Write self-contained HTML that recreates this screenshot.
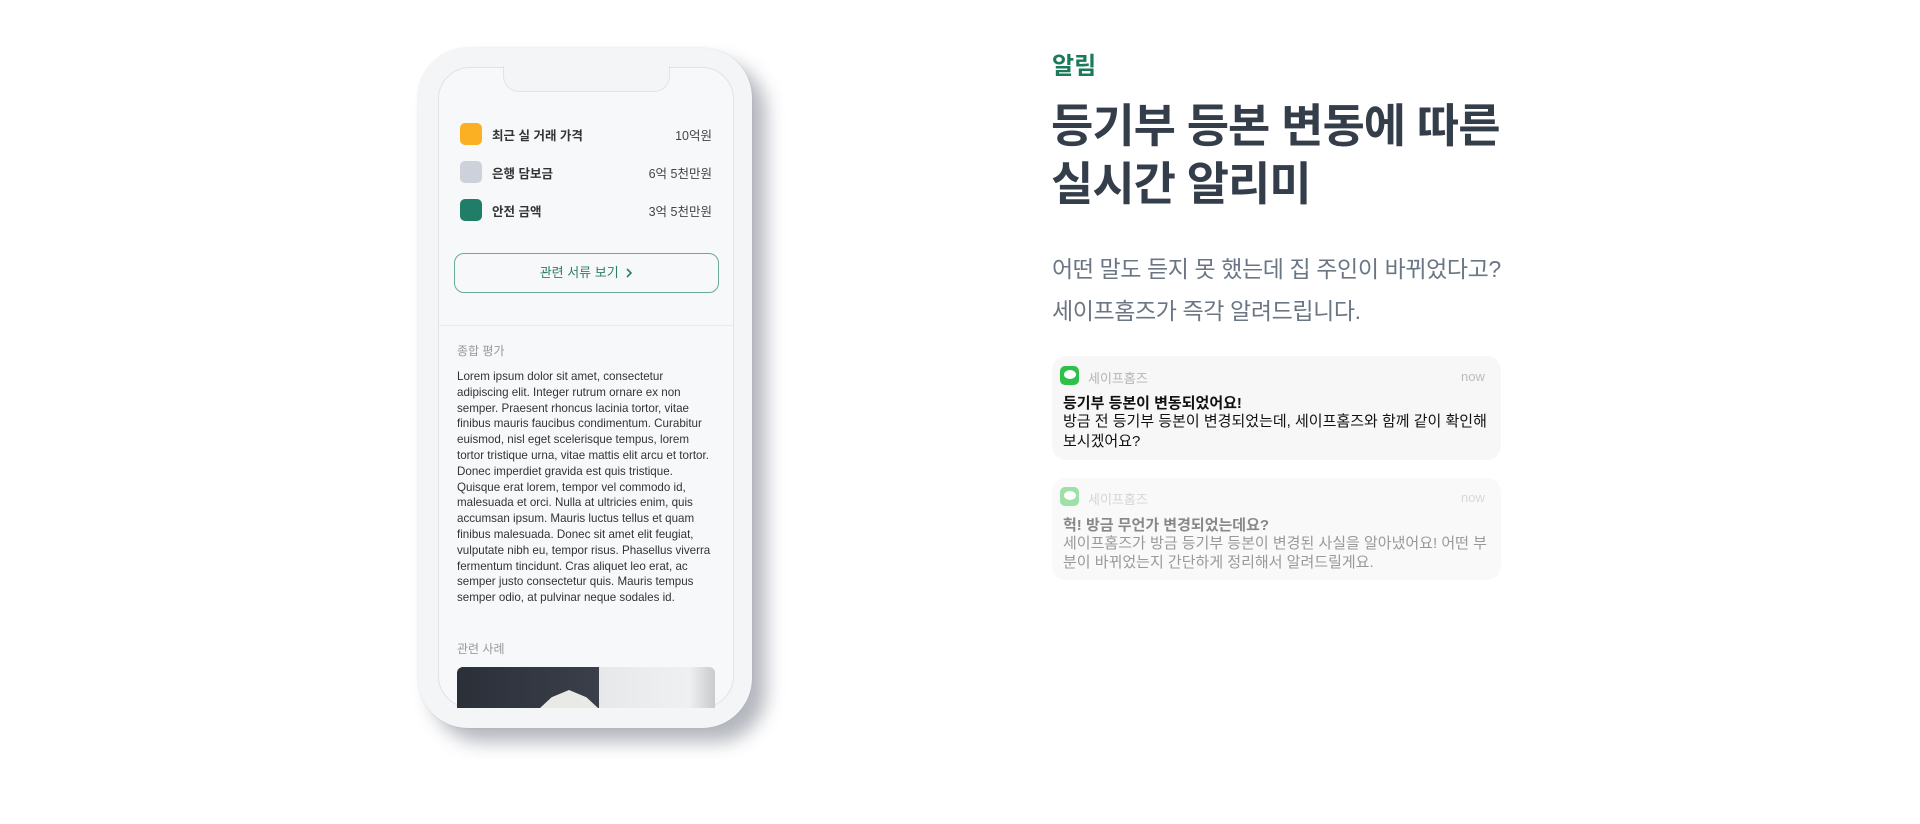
<!DOCTYPE html>
<html><head><meta charset="utf-8"><style>
*{margin:0;padding:0;box-sizing:border-box}
body{width:1920px;height:824px;background:#fff;font-family:"Liberation Sans","Noto Sans CJK KR",sans-serif;position:relative;overflow:hidden}
.a{position:absolute;white-space:nowrap}
.phone{position:absolute;left:418px;top:48px;width:334px;height:680px;border-radius:50px;background:#f3f5f7;box-shadow:14px 14px 18px rgba(40,50,70,.35),0 0 2px rgba(0,0,0,.1)}
.screen{position:absolute;left:438px;top:67px;width:296px;height:641px;border-radius:32px;background:#f7f8f9;border:1.5px solid #dde4ea;overflow:hidden}
.notch{position:absolute;left:503px;top:66px;width:167px;height:26px;background:#f3f5f7;border:1.5px solid #dde4ea;border-top:none;border-radius:0 0 16px 16px}
.sq{position:absolute;left:460px;width:22px;height:22px;border-radius:5px}
.lbl{font-size:12.5px;font-weight:bold;color:#333}
.val{font-size:12.5px;color:#444;text-align:right;width:120px;left:592px}
.card{position:absolute;left:1052px;width:449px;border-radius:14px;background:#f7f7f7}
.ic{position:absolute;width:19px;height:19px;border-radius:5px;background:#2dc14a}
.ic::after{content:"";position:absolute;left:3.5px;top:4px;width:12px;height:9px;border-radius:50%;background:#fff}
</style></head><body>
<div class="phone"></div>
<div class="screen"></div>
<div class="notch"></div>
<div class="sq" style="top:123px;background:#fbb023"></div>
<div class="sq" style="top:161px;background:#cdd1da"></div>
<div class="sq" style="top:199px;background:#1f7d68"></div>
<div class="a lbl" style="left:492px;top:125px">최근 실 거래 가격</div>
<div class="a lbl" style="left:492px;top:163px">은행 담보금</div>
<div class="a lbl" style="left:492px;top:201px">안전 금액</div>
<div class="a val" style="top:125px">10억원</div>
<div class="a val" style="top:163px">6억 5천만원</div>
<div class="a val" style="top:201px">3억 5천만원</div>
<div class="a" style="left:454px;top:253px;width:265px;height:40px;border:1.5px solid #6aaa98;border-radius:10px;text-align:center;line-height:37px;font-size:13px;color:#2e7d68">관련 서류 보기 <svg width="8" height="10" viewBox="0 0 8 10" style="vertical-align:-1px;margin-left:3px"><path d="M2 1l4 4-4 4" fill="none" stroke="#2e7d68" stroke-width="1.6"/></svg></div>
<div class="a" style="left:439px;top:325px;width:294px;height:1px;background:#e8ecef"></div>
<div class="a" style="left:457px;top:342px;font-size:12px;color:#999">종합 평가</div>
<div class="a" style="left:457px;top:369px;font-size:11.6px;line-height:15.8px;color:#333">Lorem ipsum dolor sit amet, consectetur<br>adipiscing elit. Integer rutrum ornare ex non<br>semper. Praesent rhoncus lacinia tortor, vitae<br>finibus mauris faucibus condimentum. Curabitur<br>euismod, nisl eget scelerisque tempus, lorem<br>tortor tristique urna, vitae mattis elit arcu et tortor.<br>Donec imperdiet gravida est quis tristique.<br>Quisque erat lorem, tempor vel commodo id,<br>malesuada et orci. Nulla at ultricies enim, quis<br>accumsan ipsum. Mauris luctus tellus et quam<br>finibus malesuada. Donec sit amet elit feugiat,<br>vulputate nibh eu, tempor risus. Phasellus viverra<br>fermentum tincidunt. Cras aliquet leo erat, ac<br>semper justo consectetur quis. Mauris tempus<br>semper odio, at pulvinar neque sodales id.</div>
<div class="a" style="left:457px;top:640px;font-size:12px;color:#999">관련 사례</div>
<div class="a" style="left:457px;top:667px;width:258px;height:41px;border-radius:6px 6px 0 0;background:linear-gradient(90deg,#2b2f38 0,#3a3f4a 55%,#e6e8ea 55%,#eef0f1 90%,#c8cacc 100%)"></div>
<div class="a" style="left:540px;top:690px;width:58px;height:18px;background:#e9e9e6;clip-path:polygon(0 100%,20% 40%,50% 0,80% 40%,100% 100%)"></div>

<div class="a" style="left:1052px;top:46px;font-size:24px;font-weight:bold;color:#1a7a5a">알림</div>
<div class="a" style="left:1051px;top:97px;font-size:46px;font-weight:bold;color:#343d4a;line-height:58px;letter-spacing:-1px">등기부 등본 변동에 따른<br>실시간 알리미</div>
<div class="a" style="left:1052px;top:248px;font-size:23px;color:#6b7684;line-height:42px;letter-spacing:-0.4px">어떤 말도 듣지 못 했는데 집 주인이 바뀌었다고?<br>세이프홈즈가 즉각 알려드립니다.</div>
<div class="card" style="top:356px;height:104px"></div>
<div class="ic" style="left:1060px;top:366px"></div>
<div class="a" style="left:1088px;top:368px;font-size:13px;color:#b5b5b5">세이프홈즈</div>
<div class="a" style="left:1461px;top:369px;font-size:13px;color:#bbb">now</div>
<div class="a" style="left:1063px;top:392px;font-size:15px;font-weight:bold;color:#111">등기부 등본이 변동되었어요!</div>
<div class="a" style="left:1063px;top:412px;font-size:15px;color:#111;line-height:20px">방금 전 등기부 등본이 변경되었는데, 세이프홈즈와 함께 같이 확인해<br>보시겠어요?</div>
<div class="card" style="top:478px;height:102px;background:#f9f9f9"></div>
<div class="ic" style="left:1060px;top:487px;background:#9ee0a6"></div>
<div class="a" style="left:1088px;top:489px;font-size:13px;color:#d5d5d5">세이프홈즈</div>
<div class="a" style="left:1461px;top:490px;font-size:13px;color:#d8d8d8">now</div>
<div class="a" style="left:1063px;top:514px;font-size:15px;font-weight:bold;color:#888">헉! 방금 무언가 변경되었는데요?</div>
<div class="a" style="left:1063px;top:534px;font-size:15px;color:#999;line-height:19px">세이프홈즈가 방금 등기부 등본이 변경된 사실을 알아냈어요! 어떤 부<br>분이 바뀌었는지 간단하게 정리해서 알려드릴게요.</div>
</body></html>
